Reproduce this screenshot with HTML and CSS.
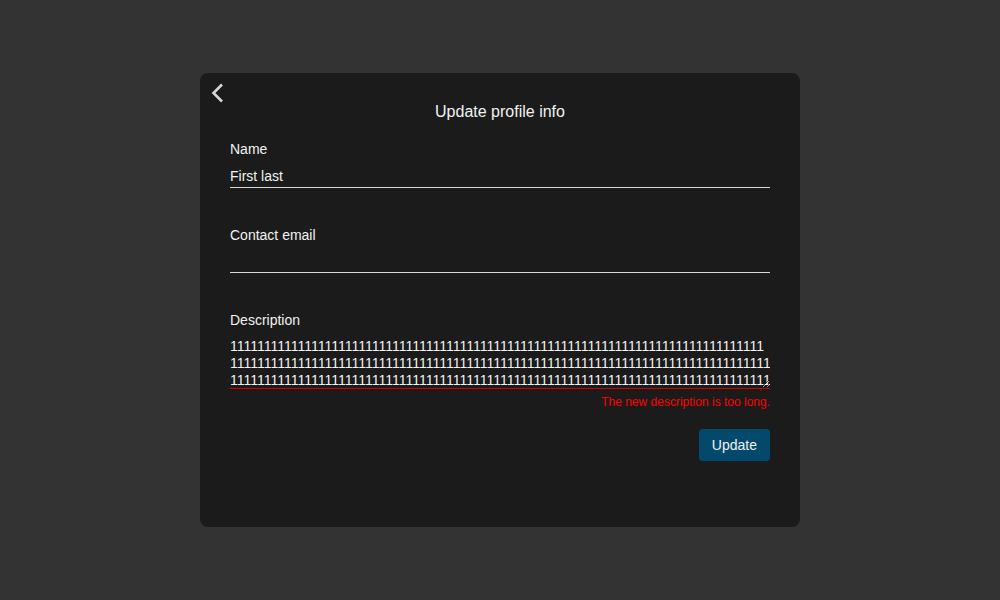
FILE: index.html
```html
<!DOCTYPE html>
<html>
<head>
<meta charset="utf-8">
<link rel="stylesheet" href="styles.css">
</head>
<body>
<div class="page">
  <div class="card">
    <div class="header">
      <button class="back" aria-label="Back">
        <svg width="20" height="22" viewBox="0 0 20 22"><polyline points="12,2.5 3.5,11 12,19.5" fill="none" stroke="#d6d6d6" stroke-width="2.6" stroke-linecap="butt" stroke-linejoin="miter"/></svg>
      </button>
      <h1 class="title">Update profile info</h1>
    </div>
    <div class="field field-first">
      <label class="label">Name</label>
      <input class="input" type="text" value="First last">
    </div>
    <div class="field">
      <label class="label">Contact email</label>
      <input class="input" type="text" value="">
    </div>
    <div class="field field-last">
      <label class="label">Description</label>
      <textarea class="textarea invalid" rows="3" wrap="off">1111111111111111111111111111111111111111111111111111111111111111111111111111111
11111111111111111111111111111111111111111111111111111111111111111111111111111111
11111111111111111111111111111111111111111111111111111111111111111111111111111111</textarea>
      <div class="error">The new description is too long.</div>
    </div>
    <div class="actions">
      <button class="update">Update</button>
    </div>
  </div>
</div>
</body>
</html>
```
FILE: styles.css
```css
html, body {
  margin: 0;
  padding: 0;
  height: 100%;
  background: #333333;
  font-family: "Liberation Sans", Arial, sans-serif;
}
.page {
  height: 600px;
  display: flex;
  align-items: center;
  justify-content: center;
}
.card {
  width: 600px;
  height: 454px;
  box-sizing: border-box;
  background: #1b1b1b;
  border-radius: 8px;
  padding: 29px 30px 0 30px;
  color: #f2f2f2;
  display: flex;
  flex-direction: column;
}
.header {
  position: relative;
  margin-bottom: 19px;
}
.back {
  position: absolute;
  left: -20px;
  top: -20px;
  width: 20px;
  height: 22px;
  padding: 0;
  border: 0;
  background: transparent;
  cursor: pointer;
  display: block;
}
.back svg {
  display: block;
}
.title {
  margin: 0;
  text-align: center;
  font-size: 16px;
  line-height: 20px;
  font-weight: normal;
  color: #f2f2f2;
}
.field {
  display: flex;
  flex-direction: column;
  margin-bottom: 39px;
}
.field-last {
  margin-bottom: 0;
}
.label {
  font-size: 14px;
  line-height: 16px;
  color: #f2f2f2;
}
.input {
  margin-top: 7px;
  height: 23px;
  box-sizing: border-box;
  padding: 0;
  border: 0;
  border-bottom: 1px solid #d9d9d9;
  background: transparent;
  color: #f2f2f2;
  font-family: "Liberation Sans", Arial, sans-serif;
  font-size: 14px;
  outline: none;
}
.field-first .input {
  margin-top: 8px;
}
.textarea {
  margin-top: 7px;
  padding: 3px 0 0 0;
  height: 54px;
  box-sizing: border-box;
  border: 0;
  border-bottom: 1px solid #d9d9d9;
  background: transparent;
  color: #f2f2f2;
  font-family: "Liberation Sans", Arial, sans-serif;
  font-size: 14px;
  line-height: 17px;
  overflow: hidden;
  resize: vertical;
  outline: none;
}
.textarea.invalid {
  border-bottom-color: #d30000;
}
.error {
  margin-top: 6px;
  text-align: right;
  font-size: 12px;
  line-height: 14px;
  color: #ff0000;
}
.actions {
  display: flex;
  justify-content: flex-end;
  margin-top: 20px;
}
.update {
  height: 32px;
  padding: 0 13px;
  border: 0;
  border-radius: 4px;
  background: #03496c;
  color: #f2f2f2;
  font-family: "Liberation Sans", Arial, sans-serif;
  font-size: 14px;
  cursor: pointer;
}
```
